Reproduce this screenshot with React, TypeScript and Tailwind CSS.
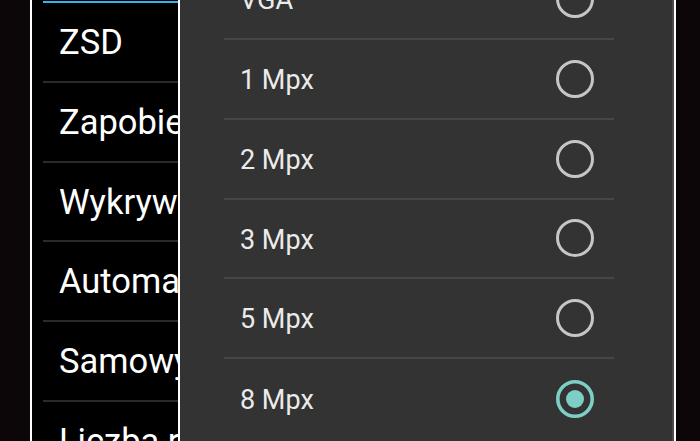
import React from "react";

const leftItems = ["ZSD", "Zapobiegaj drganiom", "Wykrywanie twarzy", "Automatyczna korekta", "Samowyzwalacz", "Liczba ramek"];
const options = ["VGA", "1 Mpx", "2 Mpx", "3 Mpx", "5 Mpx", "8 Mpx"];

function Radio({ checked }: { checked: boolean }) {
  return (
    <svg width="40" height="40" viewBox="0 0 40 40" className="shrink-0">
      {checked ? (
        <>
          <circle cx="20" cy="20" r="17.2" fill="none" stroke="#7fcec6" strokeWidth="3.6" />
          <circle cx="20" cy="20" r="9" fill="#7fcec6" />
        </>
      ) : (
        <circle cx="20" cy="20" r="17.5" fill="none" stroke="#c6c6c6" strokeWidth="3" />
      )}
    </svg>
  );
}

export default function App() {
  return (
    <div
      className="w-[700px] h-[441px] overflow-hidden bg-[#0c0609] flex pl-[30px]"
      style={{ fontFamily: "Roboto, 'Noto Sans', sans-serif" }}
    >
      <div className="w-[646px] h-full flex border-x-2 border-white">
        {/* left settings list */}
        <div className="w-[146px] h-full bg-black overflow-hidden flex flex-col pl-[11px]">
          <div className="h-[2px] mt-px bg-[#33b5e5] shrink-0" />
          {leftItems.map((t) => (
            <div
              key={t}
              className="h-[79.75px] shrink-0 flex items-center border-b-2 border-[#2a2a2a] pl-[16px] pt-[2px] text-[34.5px] text-white whitespace-nowrap"
            >
              {t}
            </div>
          ))}
        </div>
        {/* dialog */}
        <div className="flex-1 h-full border-l-2 border-white border-r-2 border-r-[#4a4a4a] bg-[#333333] overflow-hidden">
          <div className="mt-[-39.75px] ml-[44px] mr-[58px] flex flex-col">
            {options.map((o, i) => (
              <div
                key={o}
                className={`h-[79.75px] shrink-0 flex items-center justify-between pl-[16px] pr-[19px] text-[27px] text-[#ebebeb] ${
                  i < options.length - 1 ? "border-b-2 border-[#464646]" : ""
                }`}
              >
                <span className="whitespace-nowrap pt-[3px]">{o}</span>
                <Radio checked={o === "8 Mpx"} />
              </div>
            ))}
          </div>
        </div>
      </div>
    </div>
  );
}
